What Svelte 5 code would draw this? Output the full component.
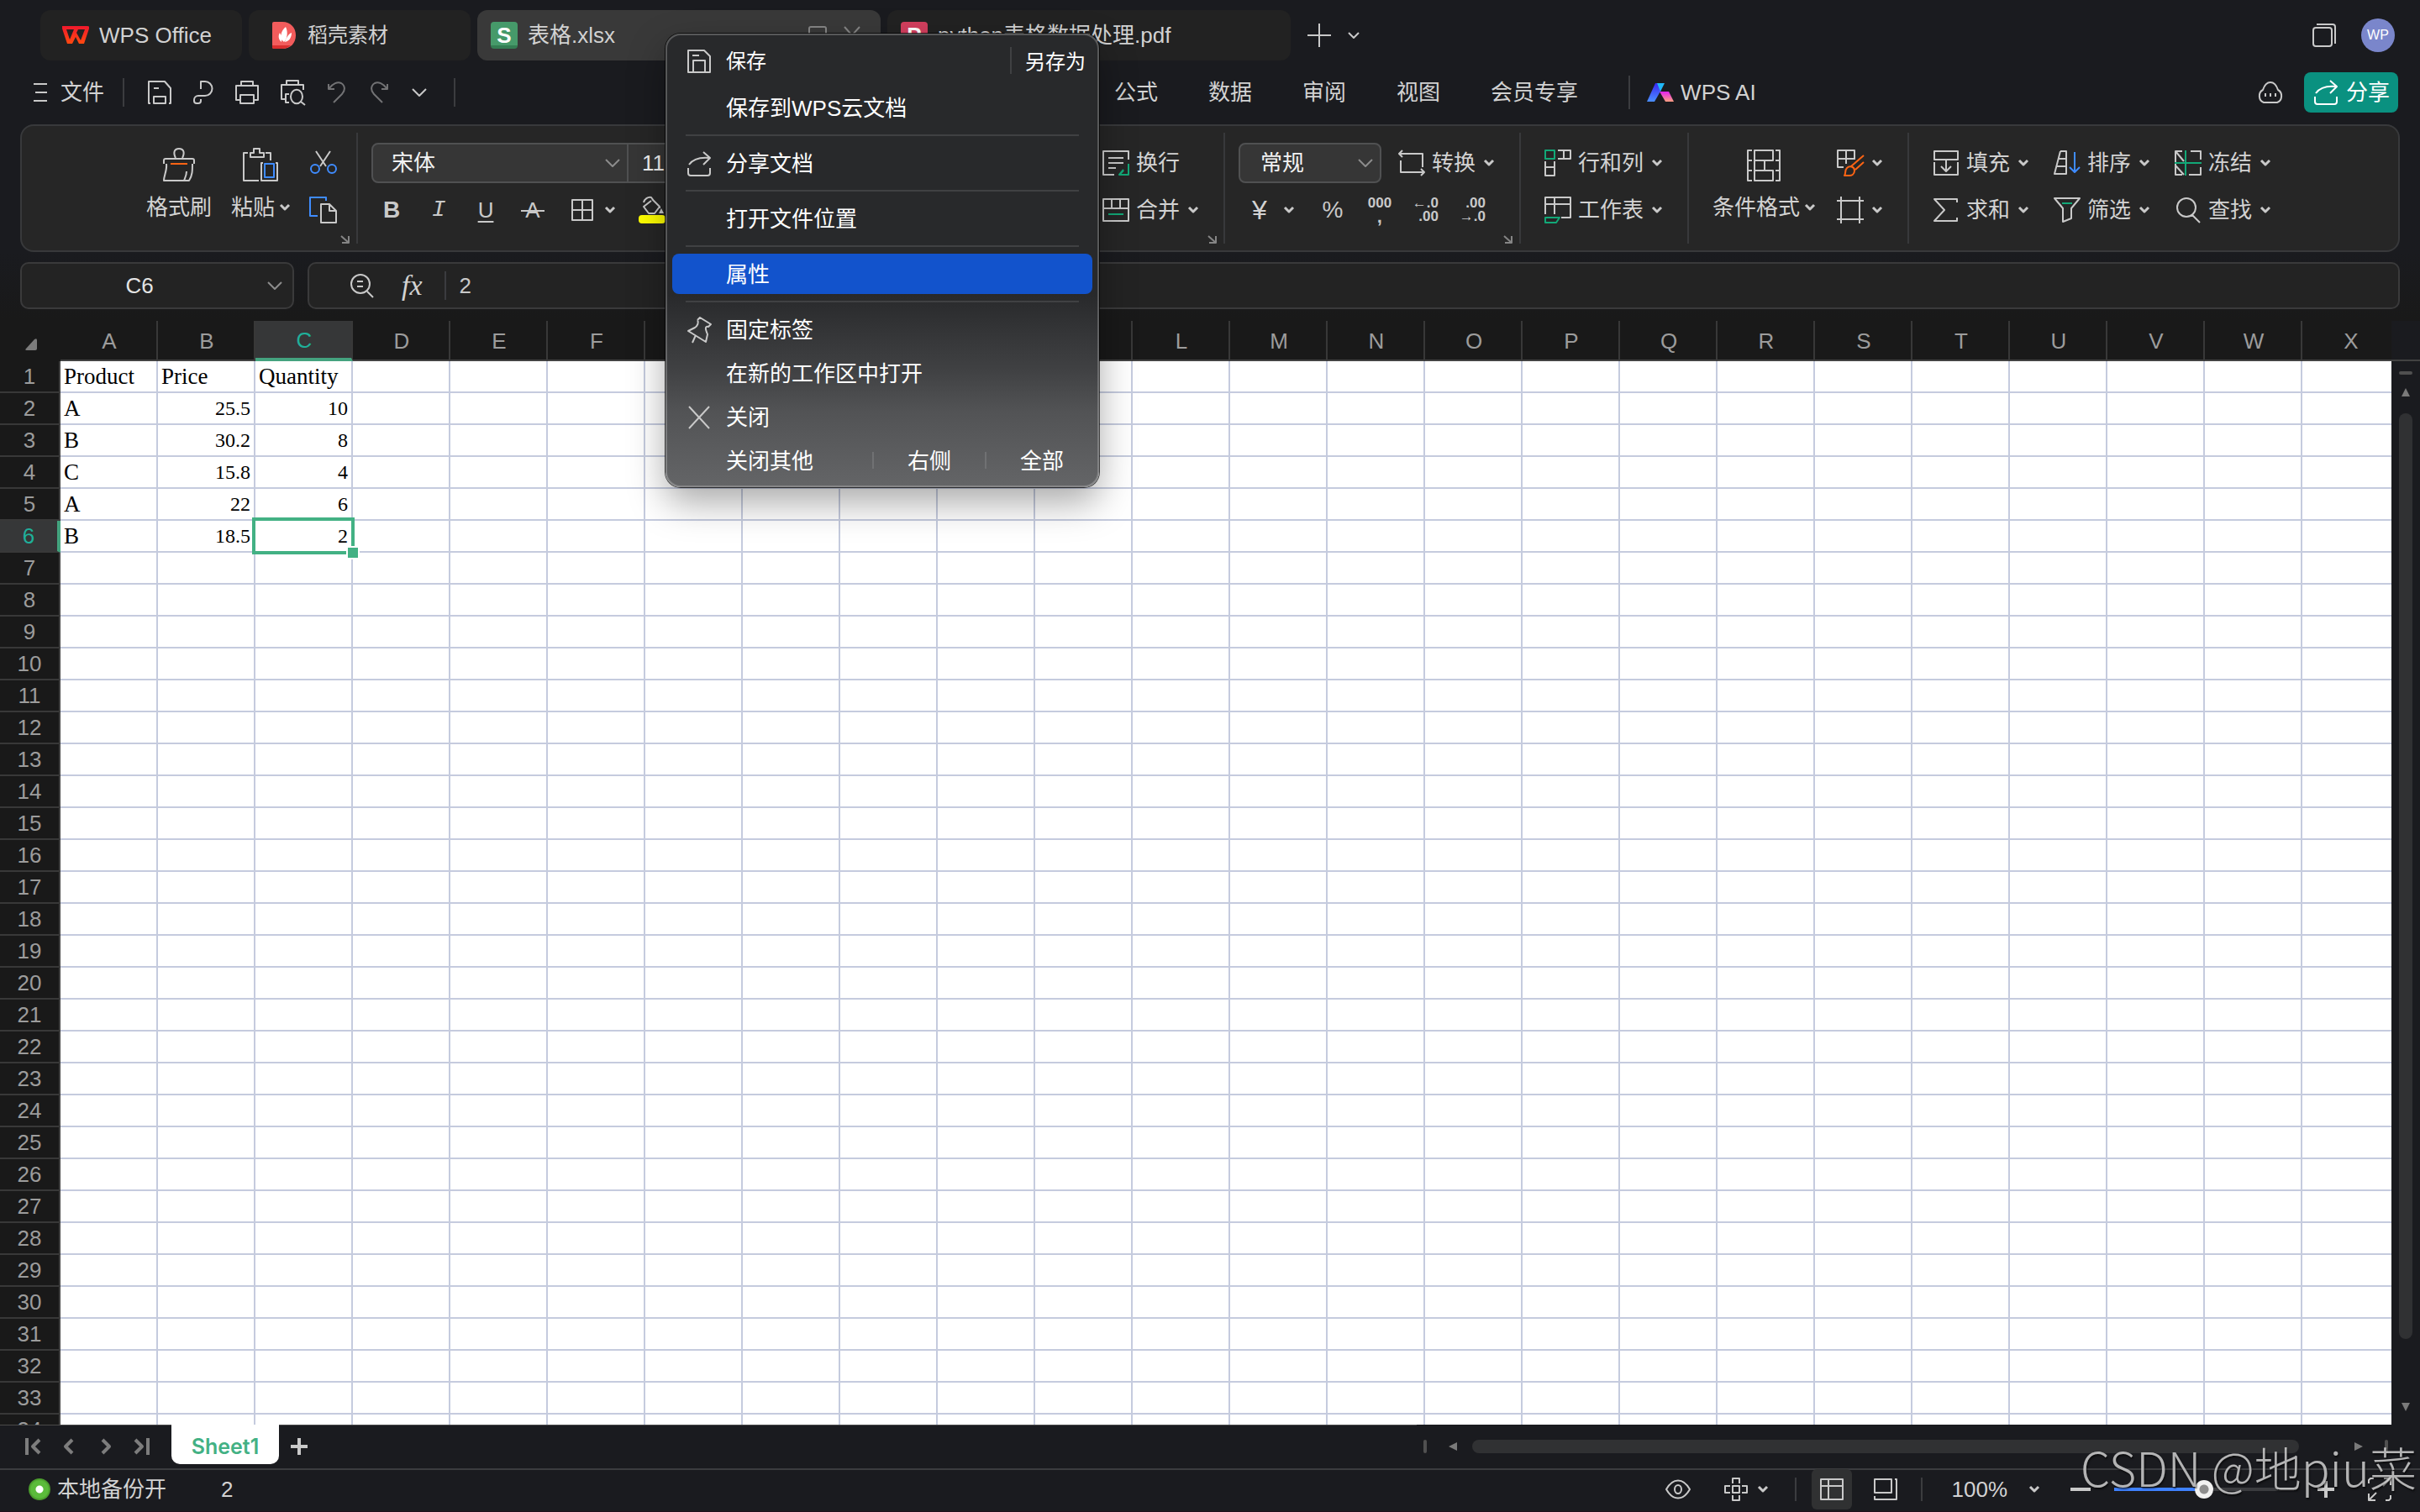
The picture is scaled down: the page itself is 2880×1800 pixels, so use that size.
<script>
  const columns = 'ABCDEFGHIJKLMNOPQRSTUVWX'.split('');
  const rowNumbers = Array.from({ length: 34 }, (_, i) => i + 1);
  const data = [
    ['Product', 'Price', 'Quantity'],
    ['A', 25.5, 10],
    ['B', 30.2, 8],
    ['C', 15.8, 4],
    ['A', 22, 6],
    ['B', 18.5, 2]
  ];
  const menus = ['公式', '数据', '审阅', '视图', '会员专享'];
  let zoom = $state(50);

  // Each icon: [width, height, ...[path, colour class]]
  const icons = {
    burger: [16, 24, ['M0 2H16M2 12H16M0 22H16', '']],
    save: [28, 28, ['M3 27H1V1H20L27 9V27H25M7 27V19H21V27ZM7 9H13', '']],
    saveMenu: [28, 28, ['M1 27V1H20L27 8V27ZM7 27V13H21V27M6 7H14', '']],
    pdf: [24, 28, ['M9 10V1H14A8 8 0 0 1 14 18H6A5 5 0 0 0 1 23V24A3 3 0 0 0 4 27H6A3 3 0 0 0 9 24V22', '']],
    print: [28, 28, ['M7 6V1H21V6M5 23H1V6H27V23H23M6 17H22V27H6Z', '']],
    preview: [30, 30, ['M7 6V1H21V6M5 23H1V6H27V12M10 17H6V27H10M26 20A6 7 0 1 1 12 20A6 7 0 1 1 26 20M24 26L29 30', '']],
    undo: [22, 26, ['M1 3V9H8M1 9C6 2 12 0 16 2C21 5 21 11 17 15L7 25', '']],
    redo: [22, 26, ['M21 3V9H14M21 9C16 2 10 0 6 2C1 5 1 11 5 15L15 25', '']],
    down: [18, 10, ['M1 1L9 9L17 1', '']],
    caret: [12, 8, ['M1 1L6 6L11 1', 'thick']],
    plus: [28, 28, ['M14 0V28M0 14H28', '']],
    small: [14, 8, ['M1 1L7 7L13 1', '']],
    brush: [38, 40, ['M15 12C12 6 13 1 19 1S26 6 23 12M1 19V15A2 2 0 0 1 3 13H35A2 2 0 0 1 37 15V19M4 19C5 27 1 33 1 39H31C35 33 35 27 35 19M28 28C28 33 26 36 25 39', ''], ['M9 19H29', 'orange']],
    paste: [42, 40, ['M6 6H1V39H19M27 6H33V15M9 6H13V1H20V6H25V11H9ZM24 18H22V39H41V18H39', ''], ['M26 19H37V35H26Z', 'blue']],
    cut: [34, 30, ['M8 1L20 19M25 1L13 19', ''], ['M12 22A5 5 0 1 1 2 22A5 5 0 1 1 12 22M32 22A5 5 0 1 1 22 22A5 5 0 1 1 32 22', 'blue']],
    copy: [34, 32, ['M14 9H24L32 17V31H14ZM24 9V17H32', ''], ['M10 23H1V1H20V5', 'blue']],
    borders: [26, 26, ['M1 1H25V25H1ZM13 1V25M1 13H25', '']],
    launcher: [10, 10, ['M0 1L9 9M9 1V9H1', 'dim']],
    wrap: [32, 30, ['M31 11V1H1V29H14M7 9H25M7 15H25M7 21H16', ''], ['M31 16V29H20L25 23M20 29L25 24', 'green']],
    merge: [32, 28, ['M1 1H31V27H1ZM1 12H31M11 1V12M21 1V12', ''], ['M7 19H25', 'green']],
    convert: [32, 32, ['M5 1L1 5L5 9M1 5H29V21M27 23L31 27L27 31M31 27H3V13', '']],
    rowcol: [32, 32, ['M16 1H31V11H16M23 1V11M1 14V31H12V14M1 21H12', ''], ['M1 1H12V11H1Z', 'green']],
    sheet: [32, 32, ['M1 21V1H31V25H20M1 9H31M12 1V21', ''], ['M1 25H18L14 31H1Z', 'green']],
    condfmt: [40, 38, ['M6 1H1V37H6M1 13H6M1 25H6M34 1H39V37H34M39 13H34M39 25H34M9 1H31V13H9ZM9 25H31V37H9ZM9 1V37M21 13V25', '']],
    style: [32, 32, ['M8 21H1V1H21V12M11 1V17M1 11H21', ''], ['M9 31C11 29 9 25 12 22C15 19 21 20 21 25C21 30 17 31 15 31ZM17 20L32 7M22 24L32 15', 'orange']],
    frame: [32, 32, ['M0 5H32M0 27H32M5 0V32M27 0V32', '']],
    fill: [30, 30, ['M1 1H29V11H1ZM1 14V29H29V14M15 11V25M9 19L15 25L21 19', '']],
    sum: [30, 28, ['M28 5V1H1L13 14L1 27H28V23', '']],
    sort: [32, 30, ['M8 1H15V28H1L8 1M6 10H15M4 19H15', ''], ['M25 2V26M19 20L25 26L31 20', 'blue']],
    filter: [32, 30, ['M5 1H31L21 13V25L11 29V13L1 1H5', ''], ['M10 7H22', 'green']],
    freeze: [32, 30, ['M9 1H1V29H9M1 1L11 13M1 18L11 29M19 1H31V11M31 20V29H17', ''], ['M13 0V30M0 15H32', 'green']],
    find: [30, 30, ['M24 12A11 11 0 1 1 2 12A11 11 0 1 1 24 12M20 21L29 30', '']],
    zoomOut: [28, 28, ['M24 12A11 11 0 1 1 2 12A11 11 0 1 1 24 12M21 21L28 28M9 9H16M9 15H16', '']],
    windows: [28, 28, ['M1 8A3 3 0 0 1 4 5H20A3 3 0 0 1 23 8V24A3 3 0 0 1 20 27H4A3 3 0 0 1 1 24ZM5 1H24A3 3 0 0 1 27 4V24', '']],
    share: [28, 30, ['M1 20V26A3 3 0 0 0 4 29H24A3 3 0 0 0 27 26V20M2 16C7 9 15 7 26 8M19 1L27 8L19 16', '']],
    pin: [30, 32, ['M12 4L15 1L28 9L25 12C20 11 22 16 24 21L22 30L1 17L9 13C12 11 14 7 12 4M10 22L6 31', '']],
    close: [24, 26, ['M0 0L24 26M24 0L0 26', '']],
    pip: [22, 22, ['M1 20V3A2 2 0 0 1 3 1H19A2 2 0 0 1 21 3V20Z', 'dim']],
    tabClose: [20, 22, ['M1 1L19 21M19 1L1 21', 'dim']],
    first: [20, 20, ['M2 0V20', 'nav'], ['M17 2L9 10L17 18', 'nav']],
    prev: [12, 20, ['M10 2L2 10L10 18', 'nav']],
    next: [12, 20, ['M2 2L10 10L2 18', 'nav']],
    last: [20, 20, ['M18 0V20', 'nav'], ['M3 2L11 10L3 18', 'nav']],
    addSheet: [20, 20, ['M10 0V20M0 10H20', 'bold']],
    minus: [24, 4, ['M0 2H24', 'bold']],
    eye: [30, 24, ['M1 12C9-2 21-2 29 12C21 26 9 26 1 12ZM19 12A4 5 0 1 1 11 12A4 5 0 1 1 19 12', '']],
    cross: [28, 28, ['M10 7V1H18V7M10 21V27H18V21M7 10H1V18H7M21 10H27V18H21M10 10H18V18H10Z', '']],
    gridView: [28, 26, ['M1 1H27V25H1ZM1 9H27M10 1V25', '']],
    pageView: [28, 26, ['M1 1H21V17H1ZM25 1H27V25H1V21', '']],
    full: [28, 28, ['M1 7V3L3 1H7M19 1H27V9M27 1L18 10M1 19V27H9M1 27L10 18M27 21V25L25 27H21', '']]
  };
</script>

{#snippet icon(name)}
  <svg class="icon" width={icons[name][0]} height={icons[name][1]} aria-hidden="true">
    {#each icons[name].slice(2) as [d, tone]}
      <path {d} class={tone} />
    {/each}
  </svg>
{/snippet}

{#snippet tool(name, label, caret = true)}
  <button class="tool">
    <span class="slot">{@render icon(name)}</span>
    {#if label}<span>{label}</span>{/if}
    {#if caret}<span class="caret">{@render icon('caret')}</span>{/if}
  </button>
{/snippet}

<div class="app">
  <header class="tabs">
    <button class="tab home">
      <svg class="logo" width="32" height="24" viewBox="0 0 32 24" aria-hidden="true">
        <defs><linearGradient id="wg" x1="0" y1="0" x2="0" y2="1"><stop offset="0" stop-color="#f0182c" /><stop offset="1" stop-color="#ff4a10" /></linearGradient></defs>
        <path fill="url(#wg)" fill-rule="evenodd" d="M0 1H30Q33 1 32 4L26 22H20L16 14L12 22H6L0 4ZM5 5L9 17L14 5ZM19 5L17 9L22 18L27 5Z" />
      </svg>
      <span>WPS Office</span>
    </button>
    <button class="tab docer">
      <svg class="logo" width="28" height="32" viewBox="0 0 28 32" aria-hidden="true">
        <path fill="#f25c5c" d="M0 2Q0 0 2 0H12C22 0 28 7 28 16S22 32 12 32H2Q0 32 0 30Z" />
        <path fill="#d92e2e" d="M0 28H22Q17 32 12 32H2Q0 32 0 30Z" />
        <path fill="#fff" d="M14 24C8 20 10 11 16 6C19 12 18 20 14 24ZM11 24C7 21 7 16 9 13C11 17 12 20 11 24ZM15 24C17 18 20 14 23 13C23 19 20 23 15 24Z" />
      </svg>
      <span>稻壳素材</span>
    </button>
    <button class="tab active">
      <span class="badge sheet-badge">S</span>
      <span class="grow">表格.xlsx</span>
      <span class="pip">{@render icon('pip')}</span>
      {@render icon('tabClose')}
    </button>
    <button class="tab doc">
      <span class="badge pdf-badge">P</span>
      <span>python表格数据处理.pdf</span>
    </button>
    <button class="plain add" aria-label="新建">{@render icon('plus')}</button>
    <button class="plain" aria-label="标签列表">{@render icon('small')}</button>
    <span class="grow"></span>
    <button class="plain" aria-label="窗口">{@render icon('windows')}</button>
    <button class="avatar">WP</button>
  </header>

  <div class="menubar">
    <button class="plain file">{@render icon('burger')}<span>文件</span></button>
    <span class="rule"></span>
    <div class="quick">
      <button class="plain" aria-label="保存文件">{@render icon('save')}</button>
      <button class="plain" aria-label="输出为PDF">{@render icon('pdf')}</button>
      <button class="plain" aria-label="打印">{@render icon('print')}</button>
      <button class="plain" aria-label="打印预览">{@render icon('preview')}</button>
      <button class="plain faded" aria-label="撤销">{@render icon('undo')}</button>
      <button class="plain faded" aria-label="恢复">{@render icon('redo')}</button>
      <button class="plain" aria-label="更多">{@render icon('down')}</button>
    </div>
    <span class="rule"></span>
    <nav>
      {#each menus as m}<button class="plain">{m}</button>{/each}
    </nav>
    <span class="rule tall"></span>
    <button class="plain ai">
      <svg class="logo" width="32" height="24" viewBox="0 0 32 24" aria-hidden="true">
        <defs>
          <linearGradient id="a1" x1="0" y1="0" x2="0" y2="1"><stop offset="0" stop-color="#3a24f0" /><stop offset="1" stop-color="#4a90ff" /></linearGradient>
          <linearGradient id="a2" x1="0" y1="0" x2="0" y2="1"><stop offset="0" stop-color="#e020f0" /><stop offset="1" stop-color="#ffa080" /></linearGradient>
        </defs>
        <path fill="url(#a1)" d="M10 1H16L17 9L9 23H0Z" />
        <path fill="#20b8f8" d="M12 1H21L16 11Z" />
        <path fill="url(#a2)" d="M15 11H26L32 23H22Z" />
      </svg>
      <span>WPS AI</span>
    </button>
    <span class="grow"></span>
    <button class="plain cloud" aria-label="云服务">
      <svg class="icon" width="32" height="26" aria-hidden="true">
        <path d="M8 25A7 8 0 0 1 7 10C9 4 12 1 16 1S23 4 25 10A7 8 0 0 1 24 25Z" />
        <path class="bold" d="M9 16H11M15 16H17M21 16H23" />
      </svg>
    </button>
    <button class="share">{@render icon('share')}<span>分享</span></button>
  </div>

  <section class="ribbon">
    <div class="group clip">
      <button class="big">{@render icon('brush')}<span>格式刷</span></button>
      <button class="big">{@render icon('paste')}<span class="with-caret">粘贴{@render icon('caret')}</span></button>
      <div class="stack">
        <button class="tool" aria-label="剪切">{@render icon('cut')}</button>
        <button class="tool" aria-label="复制">{@render icon('copy')}</button>
      </div>
      <span class="corner">{@render icon('launcher')}</span>
    </div>

    <div class="group font">
      <div class="stack">
        <div class="combo">
          <label class="picker face"><select aria-label="字体"><option>宋体</option></select>{@render icon('down')}</label>
          <label class="picker size"><select aria-label="字号"><option>11</option></select></label>
        </div>
        <div class="format">
          <button class="glyph bolder">B</button>
          <button class="glyph slanted">I</button>
          <button class="glyph under">U</button>
          <button class="glyph struck">A</button>
          <button class="tool borders" aria-label="边框">{@render icon('borders')}{@render icon('caret')}</button>
          <button class="tool" aria-label="填充颜色">
            <svg class="icon" width="32" height="32" aria-hidden="true">
              <path d="M6 7C7 3 11 0 15 1L18 5M15 5L6 12L12 20H19L25 12L16 3M25 12V14" />
              <path class="solid" d="M27 14L30 20H24Z" />
              <rect class="swatch" y="22" width="32" height="10" rx="4" />
            </svg>
          </button>
        </div>
      </div>
      <div class="stack">
        {@render tool('wrap', '换行', false)}
        {@render tool('merge', '合并')}
      </div>
      <span class="corner">{@render icon('launcher')}</span>
    </div>

    <div class="group number">
      <div class="stack">
        <div class="line">
          <label class="picker boxed"><select aria-label="数字格式"><option>常规</option></select>{@render icon('down')}</label>
          {@render tool('convert', '转换')}
        </div>
        <div class="line formats">
          <button class="tool yen">¥{@render icon('caret')}</button>
          <button class="glyph pct">%</button>
          <button class="digits"><span>000</span><span class="comma">,</span></button>
          <button class="digits right"><span>←.0</span><span>.00</span></button>
          <button class="digits right"><span>.00</span><span>→.0</span></button>
        </div>
      </div>
      <span class="corner">{@render icon('launcher')}</span>
    </div>

    <div class="group">
      <div class="stack">
        {@render tool('rowcol', '行和列')}
        {@render tool('sheet', '工作表')}
      </div>
    </div>

    <div class="group cond">
      <button class="big">{@render icon('condfmt')}<span class="with-caret">条件格式{@render icon('caret')}</span></button>
      <div class="stack">
        {@render tool('style', '')}
        {@render tool('frame', '')}
      </div>
    </div>

    <div class="group edit">
      <div class="stack">{@render tool('fill', '填充')}{@render tool('sum', '求和')}</div>
      <div class="stack">{@render tool('sort', '排序')}{@render tool('filter', '筛选')}</div>
      <div class="stack">{@render tool('freeze', '冻结')}{@render tool('find', '查找')}</div>
    </div>
  </section>

  <section class="formula">
    <div class="box name">
      <input aria-label="名称框" value="C6" />
      {@render icon('down')}
    </div>
    <div class="box entry">
      <button class="plain" aria-label="浏览公式结果">{@render icon('zoomOut')}</button>
      <button class="plain fx">fx</button>
      <span class="rule"></span>
      <input aria-label="编辑栏" value="2" />
    </div>
  </section>

  <main>
    <div class="grid">
      <table>
        <colgroup><col class="rowhead" />{#each columns as c (c)}<col class="datacol" />{/each}</colgroup>
        <thead>
          <tr>
            <th class="all"><svg width="14" height="14" aria-hidden="true"><path fill="#7c7c7c" d="M14 2V12Q14 14 12 14H2Q-1 14 1 12L11 1Q14-1 14 2Z" /></svg></th>
            {#each columns as c (c)}<th class:chosen={c === 'C'}>{c}</th>{/each}
          </tr>
        </thead>
        <tbody>
          {#each rowNumbers as n, r (n)}
            <tr>
              <th class:chosen={n === 6}>{n}</th>
              {#each columns as c, k (c)}
                <td class:num={typeof data[r]?.[k] === 'number'} class:current={n === 6 && c === 'C'}>{data[r]?.[k] ?? ''}</td>
              {/each}
            </tr>
          {/each}
        </tbody>
      </table>
    </div>
    <div class="vscroll">
      <span class="vhead"></span>
      <span class="split"></span>
      <span class="tri up"></span>
      <span class="vthumb"></span>
      <span class="tri dn"></span>
    </div>
  </main>

  <div class="sheets">
    <div class="sheet-left">
      <button class="plain" aria-label="第一个">{@render icon('first')}</button>
      <button class="plain before" aria-label="上一个">{@render icon('prev')}</button>
      <button class="plain" aria-label="下一个">{@render icon('next')}</button>
      <button class="plain" aria-label="最后一个">{@render icon('last')}</button>
      <button class="sheet-tab">Sheet1</button>
      <button class="plain" aria-label="新建工作表">{@render icon('addSheet')}</button>
    </div>
    <div class="hscroll">
      <span class="grip"></span>
      <span class="tri lt"></span>
      <span class="hthumb"></span>
      <span class="tri rt"></span>
      <span class="grip"></span>
    </div>
  </div>

  <footer>
    <span class="dot"></span>
    <span class="backup">本地备份开</span>
    <span>2</span>
    <span class="grow"></span>
    <button class="plain" aria-label="护眼模式">{@render icon('eye')}</button>
    <button class="plain reading" aria-label="阅读模式">{@render icon('cross')}{@render icon('caret')}</button>
    <span class="rule short"></span>
    <button class="view on" aria-label="普通视图">{@render icon('gridView')}</button>
    <button class="view" aria-label="页面布局">{@render icon('pageView')}</button>
    <span class="rule short"></span>
    <button class="plain percent">100%{@render icon('caret')}</button>
    <button class="plain" aria-label="缩小">{@render icon('minus')}</button>
    <input type="range" min="0" max="100" bind:value={zoom} aria-label="缩放" />
    <button class="plain" aria-label="放大">{@render icon('addSheet')}</button>
    <button class="plain full" aria-label="全屏">{@render icon('full')}</button>
  </footer>

  <div class="popup" role="menu">
    <div class="first-row">
      <button role="menuitem" class="save"><span class="mark">{@render icon('saveMenu')}</span>保存</button>
      <span class="vline tallv"></span>
      <button role="menuitem" class="save-as">另存为</button>
    </div>
    <button role="menuitem"><span class="mark"></span>保存到WPS云文档</button>
    <hr />
    <button role="menuitem"><span class="mark">{@render icon('share')}</span>分享文档</button>
    <hr />
    <button role="menuitem"><span class="mark"></span>打开文件位置</button>
    <hr />
    <button role="menuitem" class="hot"><span class="mark"></span>属性</button>
    <hr />
    <button role="menuitem"><span class="mark">{@render icon('pin')}</span>固定标签</button>
    <button role="menuitem"><span class="mark"></span>在新的工作区中打开</button>
    <button role="menuitem"><span class="mark">{@render icon('close')}</span>关闭</button>
    <div class="last-row">
      <button role="menuitem" class="others"><span class="mark"></span>关闭其他</button>
      <span class="vline"></span>
      <button role="menuitem" class="cell">右侧</button>
      <span class="vline"></span>
      <button role="menuitem" class="cell">全部</button>
    </div>
  </div>

  <div class="watermark">CSDN @地piu菜</div>
</div>

<style>
  :global(body) {
    background: #1a1b1f;
  }
  .app {
    position: relative;
    display: flex;
    flex-direction: column;
    height: 100vh;
    overflow: hidden;
    box-sizing: border-box;
    background: #1a1b1f;
    color: #d2d2d2;
    font-family: 'Liberation Sans', 'Noto Sans CJK SC', sans-serif;
    font-size: 26px;
    line-height: 32px;
    white-space: nowrap;
  }
  .app :where(button, input, select) {
    margin: 0;
    padding: 0;
    border: 0;
    background: none;
    color: inherit;
    font: inherit;
    outline: none;
    appearance: none;
  }
  .app * {
    box-sizing: border-box;
  }
  .grow {
    flex: 1;
  }
  .icon {
    display: block;
    flex: none;
    overflow: visible;
    fill: none;
    stroke: #c9c9c9;
    stroke-width: 2;
    stroke-linejoin: round;
  }
  .icon .orange { stroke: #ff6414; }
  .icon .blue { stroke: #3f8cff; }
  .icon .green { stroke: #12a877; }
  .icon .dim { stroke: #858585; }
  .icon .thick { stroke-width: 3; }
  .icon .nav { stroke: #7d7d7d; stroke-width: 4; }
  .icon .bold { stroke-width: 4; }
  .icon .solid { fill: #c9c9c9; stroke: none; }
  .icon .swatch { fill: #ffff00; stroke: none; }
  .logo {
    flex: none;
  }
  .plain {
    display: flex;
    align-items: center;
  }
  .rule {
    flex: none;
    width: 2px;
    height: 34px;
    background: #3b3c3f;
  }

  .tabs {
    display: flex;
    align-items: center;
    gap: 8px;
    flex: none;
    padding: 12px 30px 0 48px;
  }
  .tab {
    display: flex;
    align-items: center;
    gap: 12px;
    height: 60px;
    padding: 0 24px 0 16px;
    border-radius: 12px;
    background: #222222;
    text-align: left;
  }
  .home { width: 240px; padding-left: 26px; }
  .docer { width: 264px; gap: 14px; padding-left: 28px; font-size: 24px; }
  .active { width: 480px; background: #393939; }
  .doc { width: 480px; }
  .pip { margin-right: 8px; }
  .badge {
    display: grid;
    place-items: center;
    width: 32px;
    height: 32px;
    border-radius: 4px;
    color: #fff;
    font-size: 26px;
    font-weight: bold;
    line-height: 28px;
  }
  .sheet-badge { background: linear-gradient(#469a6a 28px, #347d53 28px); }
  .pdf-badge { background: #d23f5e; }
  .add { margin: 0 12px; }
  .avatar {
    width: 40px;
    height: 40px;
    margin-left: 22px;
    border-radius: 50%;
    background: #7a86cb;
    color: #fff;
    font-size: 16px;
  }

  .menubar {
    display: flex;
    align-items: center;
    flex: none;
    height: 76px;
    padding: 0 26px 0 40px;
  }
  .file { gap: 16px; margin-right: 22px; }
  .quick {
    display: flex;
    align-items: center;
    gap: 26px;
    padding: 0 32px 0 28px;
  }
  .faded { margin-right: 2px; opacity: 0.5; }
  nav {
    display: flex;
    gap: 60px;
    padding: 0 60px 0 784px;
  }
  .tall { height: 40px; }
  .ai { gap: 8px; margin-left: 20px; }
  .cloud { margin-right: 24px; }
  .share {
    display: flex;
    align-items: center;
    gap: 10px;
    height: 48px;
    padding: 0 10px 0 12px;
    border-radius: 8px;
    background: #0a9180;
    color: #fff;
  }
  .share .icon { stroke: #fff; }

  .ribbon {
    display: flex;
    flex: none;
    height: 152px;
    margin: 0 24px;
    padding: 8px 0;
    border: 2px solid #38393b;
    border-radius: 16px;
    background: #262626;
  }
  .group {
    position: relative;
    display: flex;
    flex: none;
    padding: 12px 28px;
    border-right: 2px solid #38393b;
  }
  .stack {
    display: flex;
    flex-direction: column;
    gap: 8px;
  }
  .line, .format, .combo {
    display: flex;
    align-items: center;
    height: 48px;
  }
  .tool {
    display: flex;
    align-items: center;
    gap: 8px;
    height: 48px;
  }
  .slot {
    display: flex;
    justify-content: center;
    width: 32px;
  }
  .caret { margin-left: 2px; margin-right: 2px; }
  .big {
    display: flex;
    flex-direction: column;
    align-items: center;
    gap: 15px;
    height: 104px;
    padding-top: 6px;
  }
  .with-caret {
    display: flex;
    align-items: center;
    gap: 6px;
  }
  .corner {
    position: absolute;
    right: 8px;
    bottom: 0;
  }
  .clip { gap: 23px; padding-left: 148px; padding-right: 22px; }
  .font {
    flex: 1;
    justify-content: space-between;
    padding-left: 16px;
  }
  .combo {
    width: 480px;
    border: 2px solid #505152;
    border-radius: 8px;
    background: #363636;
    color: #f2f2f2;
  }
  .picker {
    display: flex;
    align-items: center;
    justify-content: space-between;
  }
  .picker select { flex: 1; }
  .picker .icon { stroke: #8c8c8c; }
  .face {
    width: 304px;
    height: 44px;
    padding: 0 8px 0 22px;
    border-right: 2px solid #505152;
  }
  .size { padding-left: 16px; }
  .boxed {
    width: 170px;
    height: 48px;
    margin-right: 20px;
    padding: 0 8px 0 24px;
    border: 2px solid #505152;
    border-radius: 8px;
    background: #363636;
    color: #f2f2f2;
  }
  .glyph {
    position: relative;
    width: 28px;
    text-align: center;
    color: #c9c9c9;
  }
  .format {
    gap: 28px;
    padding-left: 10px;
  }
  .bolder { font-weight: bold; font-size: 28px; }
  .slanted { font: italic 28px/32px 'Liberation Mono', monospace; }
  .under { text-decoration: underline; text-underline-offset: 4px; text-decoration-thickness: 2px; }
  .struck::after {
    content: '';
    position: absolute;
    inset: 16px 0 auto;
    height: 2px;
    background: #c9c9c9;
  }
  .borders { gap: 14px; margin-left: 4px; }
  .number { padding-left: 16px; }
  .formats { padding-left: 16px; gap: 28px; }
  .yen { width: 54px; gap: 20px; font-size: 32px; }
  .pct { font-size: 28px; }
  .digits {
    display: flex;
    flex-direction: column;
    align-items: center;
    width: 28px;
    font-size: 17px;
    font-weight: bold;
    line-height: 16px;
    color: #c9c9c9;
  }
  .right { align-items: flex-end; }
  .comma { font-size: 22px; }
  .cond { gap: 26px; }
  .cond .big { padding-top: 8px; }
  .edit { border-right: 0; gap: 28px; padding-right: 150px; }

  .formula {
    display: flex;
    gap: 16px;
    flex: none;
    padding: 12px 24px 14px;
    background: linear-gradient(#1a1b1f, #191919);
  }
  .box {
    display: flex;
    align-items: center;
    height: 56px;
    border: 2px solid #3a3a3b;
    border-radius: 10px;
    background: #232323;
    color: #e4e4e4;
  }
  .name {
    width: 326px;
    padding: 0 12px 0 0;
  }
  .name input { flex: 1; min-width: 0; padding-right: 12px; text-align: center; }
  .name .icon { stroke: #8c8c8c; }
  .entry {
    flex: 1;
    padding-left: 48px;
  }
  .entry input { flex: 1; color: #c9c9c9; }
  .entry .fx {
    margin: 0 26px 0 34px;
    color: #d2d2d2;
    font: italic 34px/34px 'Liberation Serif', serif;
  }
  .entry .rule { margin-right: 16px; }

  main {
    display: flex;
    flex: 1;
    min-height: 0;
  }
  .grid {
    flex: 1;
    min-width: 0;
    overflow: hidden;
    background: #fff;
  }
  table {
    width: 2856px;
    table-layout: fixed;
    border-collapse: separate;
    border-spacing: 0;
  }
  .rowhead { width: 72px; }
  .datacol { width: 116px; }
  th {
    height: 38px;
    padding: 0;
    border-right: 2px solid #424242;
    border-bottom: 2px solid #383838;
    background: #191919;
    color: #9c9c9c;
    font-weight: normal;
    line-height: 36px;
  }
  thead th {
    height: 48px;
    padding-top: 2px;
    padding-left: 2px;
    border-right-color: #383838;
    border-bottom-color: #424242;
  }
  thead .all {
    padding: 8px 0 0 4px;
    border-color: #191919;
    line-height: 14px;
  }
  th.chosen {
    border-right: 4px solid #44a37f;
    background: #363738;
    color: #1fb09a;
  }
  thead th.chosen {
    border-right: 2px solid #383838;
    border-bottom: 4px solid #44a37f;
  }
  td {
    position: relative;
    height: 38px;
    padding: 0 4px;
    border-right: 2px solid #c5cbde;
    border-bottom: 2px solid #c5cbde;
    color: #000;
    font-family: 'Liberation Serif', serif;
    font-size: 27px;
    line-height: 36px;
  }
  .num { font-size: 24px; text-align: right; }
  .current { z-index: 1; }
  .current::before {
    content: '';
    position: absolute;
    inset: -4px;
    border: 4px solid #43b184;
  }
  .current::after {
    content: '';
    position: absolute;
    right: -8px;
    bottom: -8px;
    width: 12px;
    height: 12px;
    background: #43b184;
    box-shadow: 0 0 0 2px #fff;
  }
  .vscroll {
    display: flex;
    flex-direction: column;
    align-items: center;
    width: 34px;
    padding-bottom: 16px;
    background: #1a1b1f;
  }
  .vhead {
    width: 100%;
    height: 48px;
    border-bottom: 2px solid #424242;
  }
  .split {
    width: 16px;
    height: 4px;
    margin: 12px 0 16px;
    border-radius: 2px;
    background: #505050;
  }
  .vthumb {
    flex: 1;
    width: 16px;
    margin: 20px 0 76px;
    border-radius: 8px;
    background: #303133;
  }
  .tri {
    width: 10px;
    height: 10px;
    background: #7a7a7a;
  }
  .up { clip-path: polygon(50% 0, 100% 100%, 0 100%); }
  .dn { clip-path: polygon(0 0, 100% 0, 50% 100%); }
  .lt { clip-path: polygon(0 50%, 100% 0, 100% 100%); }
  .rt { clip-path: polygon(0 0, 100% 50%, 0 100%); }

  .sheets {
    display: flex;
    flex: none;
    height: 54px;
    border-bottom: 2px solid #3b3c3f;
  }
  .sheet-left {
    display: flex;
    align-items: center;
    gap: 26px;
    width: 1686px;
    padding-left: 30px;
    box-shadow: inset 0 1px #4a4a4a;
  }
  .before { margin-right: 6px; }
  .sheet-tab {
    align-self: flex-start;
    width: 128px;
    height: 47px;
    margin-right: -12px;
    padding-top: 6px;
    border-radius: 0 0 10px 10px;
    background: #fff;
    color: #43b184;
    font: 600 25px/41px Inter, sans-serif;
  }
  .hscroll {
    display: flex;
    align-items: center;
    flex: 1;
    padding: 0 38px 0 8px;
  }
  .grip {
    width: 4px;
    height: 16px;
    border-radius: 2px;
    background: #505050;
  }
  .lt { margin: 0 18px 0 26px; }
  .rt { margin: 0 26px 0 66px; }
  .hthumb {
    flex: 1;
    height: 16px;
    border-radius: 8px;
    background: #303133;
  }

  footer {
    display: flex;
    align-items: center;
    flex: none;
    height: 50px;
    padding: 0 34px 4px;
    border-bottom: 1px solid #1f0f1c;
  }
  .dot {
    width: 26px;
    height: 26px;
    margin-right: 8px;
    border-radius: 50%;
    background: radial-gradient(circle, #fff 4px, #5bbb3b 5px 10px, #4a9c2c 12px);
  }
  .backup { margin-right: 65px; }
  .reading { gap: 12px; margin: 0 32px 0 40px; }
  .short { height: 28px; }
  .view {
    display: grid;
    place-items: center;
    width: 48px;
    height: 48px;
    border-radius: 6px;
  }
  .on {
    margin: 0 16px 0 18px;
    background: #303132;
  }
  .view + .rule { margin-left: 18px; }
  .percent { gap: 26px; margin: 0 37px 0 35px; }
  input[type='range'] {
    width: 214px;
    height: 22px;
    margin: 0 28px;
    background: linear-gradient(90deg, #3f82ff 50%, #3b3c3f 50%) center / 100% 4px no-repeat;
  }
  input[type='range']::-webkit-slider-thumb {
    appearance: none;
    width: 22px;
    height: 22px;
    border-radius: 50%;
    background: radial-gradient(circle, #8e8e8e 5px, #f2f2f2 6px);
  }
  .full { margin-left: 40px; }

  .popup {
    position: absolute;
    left: 792px;
    top: 40px;
    display: flex;
    flex-direction: column;
    width: 516px;
    padding: 2px 6px 6px;
    border: 2px solid rgba(255, 255, 255, 0.22);
    border-radius: 18px;
    background: linear-gradient(#28292b 0 310px, #404143 400px, #525355 450px, #5c5d5f 500px, #646567) border-box;
    box-shadow: 0 0 0 1px rgba(0, 0, 0, 0.7), 0 18px 44px rgba(0, 0, 0, 0.34);
    color: #fff;
  }
  .popup button {
    display: flex;
    align-items: center;
    flex: none;
    height: 48px;
    padding-top: 2px;
    text-align: left;
  }
  .popup > button { margin-bottom: 4px; border-radius: 8px; }
  .popup > button:has(+ hr) { margin-bottom: 0; }
  .mark {
    display: grid;
    place-items: center;
    width: 28px;
    height: 32px;
    margin: 0 18px;
  }
  hr {
    width: calc(100% - 32px);
    height: 2px;
    margin: 8px 16px;
    border: 0;
    background: #404143;
  }
  .popup .hot {
    background: #1253cc;
  }
  .first-row, .last-row {
    display: flex;
    align-items: center;
  }
  .first-row {
    height: 56px;
    margin-bottom: 4px;
    font-size: 24px;
  }
  .last-row { margin-right: -6px; }
  .popup .save, .popup .others { flex: 1; }
  .popup .save-as { padding: 4px 8px 0 16px; }
  .vline {
    width: 2px;
    height: 20px;
    background: #707173;
  }
  .tallv {
    height: 32px;
    background: #404143;
  }
  .popup .cell { justify-content: center; width: 132px; }

  .watermark {
    position: absolute;
    right: 4px;
    bottom: 16px;
    color: rgba(225, 225, 225, 0.78);
    font-family: 'Noto Sans CJK SC', sans-serif;
    font-size: 56px;
    font-weight: 300;
    line-height: 76px;
    text-shadow: 1px 2px 2px rgba(0, 0, 0, 0.6);
    pointer-events: none;
  }
</style>
